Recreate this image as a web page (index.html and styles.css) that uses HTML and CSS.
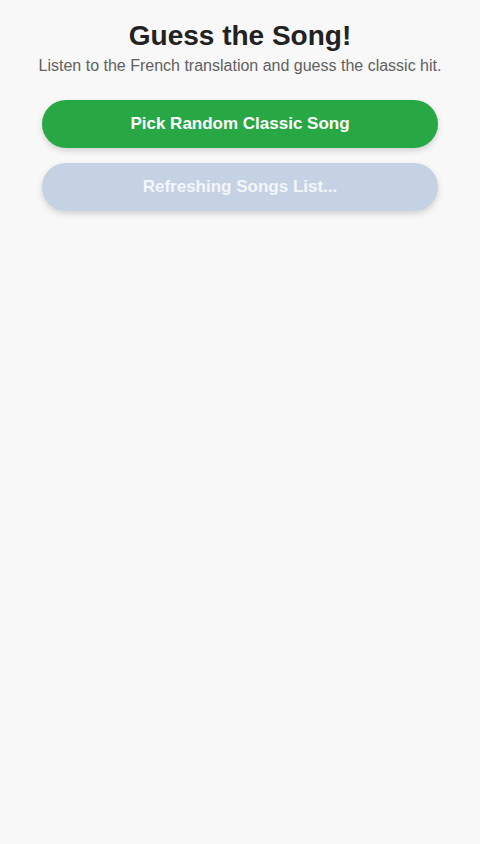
FILE: index.html
```html
<!DOCTYPE html>
<html lang="en">
<head>
  <meta charset="UTF-8" />
  <meta name="viewport" content="width=device-width, initial-scale=1.0">
  <title>Guess the Song!</title>
  <link rel="stylesheet" href="styles.css">
</head>
<body>

  <div class="container">
    <h1>Guess the Song!</h1>
    <p class="subtitle">Listen to the French translation and guess the classic hit.</p>

    <div class="actions">
      <button class="btn btn-pick" id="pickBtn">Pick Random Classic Song</button>
      <button class="btn btn-refresh" id="refreshBtn" disabled>Refreshing Songs List...</button>
    </div>
  </div>

</body>
</html>
```

FILE: styles.css
```css
* {
  margin: 0;
  padding: 0;
  box-sizing: border-box;
}

body {
  background-color: #f8f8f8;
  color: #222;
  font-family: "Liberation Sans", Arial, Helvetica, sans-serif;
  padding: 20px 0;
}

.container {
  text-align: center;
  max-width: 396px;
  width: 100%;
  margin: 0 auto;
}

h1 {
  font-size: 28px;
  font-weight: bold;
  color: #222;
}

.subtitle {
  font-size: 16px;
  color: #616161;
  margin-top: 5px;
  white-space: nowrap;
  margin-left: -20px;
  margin-right: -20px;
}

.actions {
  display: flex;
  flex-direction: column;
  gap: 15px;
  margin-top: 25px;
}

.btn {
  width: 100%;
  height: 48px;
  border: none;
  border-radius: 24px;
  font-family: inherit;
  font-size: 17px;
  font-weight: bold;
  color: #fff;
  cursor: pointer;
  box-shadow: 0 3px 6px rgba(0, 0, 0, 0.15);
}

.btn-pick {
  background-color: #28a745;
}

.btn-refresh {
  background-color: #c5d2e4;
  color: #f3f6fa;
  cursor: default;
}
```
